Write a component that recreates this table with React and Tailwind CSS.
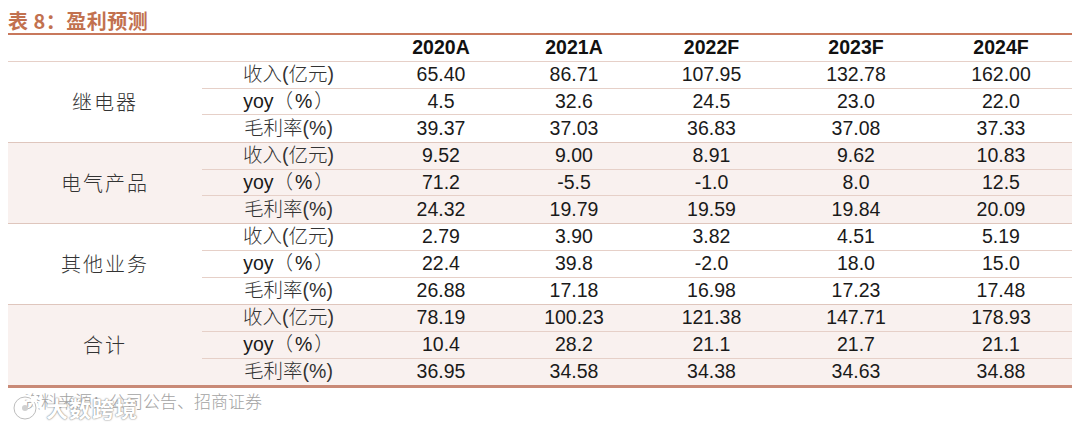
import React from 'react';

const years = ['2020A', '2021A', '2022F', '2023F', '2024F'];

const groups = [
  {
    name: '继电器',
    shaded: false,
    rows: [
      ['收入(亿元)', '65.40', '86.71', '107.95', '132.78', '162.00'],
      ['yoy（%）', '4.5', '32.6', '24.5', '23.0', '22.0'],
      ['毛利率(%)', '39.37', '37.03', '36.83', '37.08', '37.33'],
    ],
  },
  {
    name: '电气产品',
    shaded: true,
    rows: [
      ['收入(亿元)', '9.52', '9.00', '8.91', '9.62', '10.83'],
      ['yoy（%）', '71.2', '-5.5', '-1.0', '8.0', '12.5'],
      ['毛利率(%)', '24.32', '19.79', '19.59', '19.84', '20.09'],
    ],
  },
  {
    name: '其他业务',
    shaded: false,
    rows: [
      ['收入(亿元)', '2.79', '3.90', '3.82', '4.51', '5.19'],
      ['yoy（%）', '22.4', '39.8', '-2.0', '18.0', '15.0'],
      ['毛利率(%)', '26.88', '17.18', '16.98', '17.23', '17.48'],
    ],
  },
  {
    name: '合计',
    shaded: true,
    rows: [
      ['收入(亿元)', '78.19', '100.23', '121.38', '147.71', '178.93'],
      ['yoy（%）', '10.4', '28.2', '21.1', '21.7', '21.1'],
      ['毛利率(%)', '36.95', '34.58', '34.38', '34.63', '34.88'],
    ],
  },
];

// column widths after the group label column
const cols = 'grid grid-cols-[173px_132px_134px_141px_148px_142px]';

const Label = ({ text }) => {
  // yoy in latin, the rest CJK
  if (text.startsWith('yoy')) {
    return (
      <span>
        <span className="font-normal text-[#1a1a1a]">yoy</span>
        <span className="font-light text-[#333]">（</span>
        <span className="font-normal text-[#1a1a1a] px-[2px]">%</span>
        <span className="font-light text-[#333]">）</span>
      </span>
    );
  }
  return <span className="font-light text-[#333]">{text}</span>;
};

export default function App() {
  return (
    <div className="w-[1080px] h-[425px] bg-white relative overflow-hidden font-['Liberation_Sans','Noto_Sans_CJK_SC',sans-serif]">
      <div className="pl-[8px] w-[1072px] pt-[9px]">
        {/* Title */}
        <div className="h-[26px] leading-[24px] border-b-2 border-[#c8785c] text-[20px] font-bold text-[#c2714f] font-['Noto_Sans_CJK_SC',sans-serif] tracking-[0.5px]">
          表 8：盈利预测
        </div>

        {/* Header */}
        <div className="flex h-[27px] border-b border-[#e6d0c8] items-center">
          <div className="w-[194px]" />
          <div className={cols + ' flex-1 items-center'}>
            <div />
            {years.map((y) => (
              <div key={y} className="text-center text-[19.5px] font-bold text-[#111]">
                {y}
              </div>
            ))}
          </div>
        </div>

        {/* Groups */}
        {groups.map((g, gi) => (
          <div
            key={g.name}
            className={
              'flex ' +
              (g.shaded ? 'bg-[#f9f1ef] ' : 'bg-white ') +
              (gi === groups.length - 1
                ? 'border-b-[3px] border-[#c98a77]'
                : 'border-b border-[#dfc6bd]')
            }
          >
            <div className="w-[194px] flex items-center justify-center text-[20px] font-light text-[#333] tracking-[2px] font-['Noto_Sans_CJK_SC',sans-serif]">
              {g.name}
            </div>
            <div className="flex-1">
              {g.rows.map((r, ri) => (
                <div
                  key={ri}
                  className={
                    cols +
                    ' h-[26.7px] items-center ' +
                    (ri < 2 ? 'border-b border-[#e6d0c8]' : '')
                  }
                >
                  <div className="text-center text-[19.5px] leading-none">
                    <Label text={r[0]} />
                  </div>
                  {r.slice(1).map((v, vi) => (
                    <div key={vi} className="text-center text-[19.5px] leading-none text-[#1a1a1a]">
                      {v}
                    </div>
                  ))}
                </div>
              ))}
            </div>
          </div>
        ))}

        {/* Source */}
        <div className="mt-[3px] pl-[16px] text-[17px] leading-[20px] text-[#a3a3a3] font-light font-['Noto_Sans_CJK_SC',sans-serif]">
          资料来源：公司公告、招商证券
        </div>
      </div>

      {/* Watermark */}
      <div className="absolute left-[10px] top-[391px] flex items-center gap-[6px]">
        <svg width="30" height="30" viewBox="0 0 30 30">
          <circle cx="15" cy="15" r="11" fill="none" stroke="#ffffff" strokeWidth="5" />
          <circle cx="15" cy="15" r="11" fill="none" stroke="#bdbdbd" strokeWidth="1" />
          <path d="M22 8 L27 3" stroke="#ffffff" strokeWidth="5" />
          <circle cx="15" cy="15" r="3" fill="#d0d0d0" />
        </svg>
        <span className="text-[22px] font-bold text-white tracking-[1px] font-['Noto_Sans_CJK_SC',sans-serif] [text-shadow:0_0_2px_#8a8a8a,0_0_1px_#8a8a8a]">
          大数跨境
        </span>
      </div>
    </div>
  );
}
